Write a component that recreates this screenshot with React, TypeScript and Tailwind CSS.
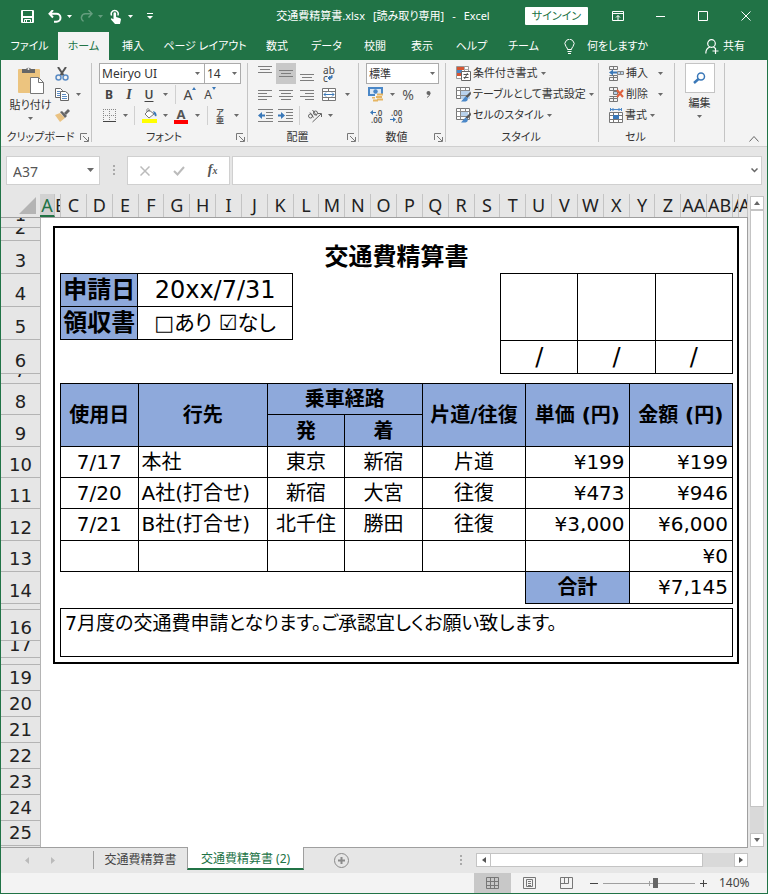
import React from 'react';

const tabs = [
  { label: 'ファイル', width: 'w-[57px]' },
  { label: 'ホーム', width: 'w-[51px]', active: true },
  { label: '挿入', width: 'w-12' },
  { label: 'ページ レイアウト', width: 'w-24' },
  { label: '数式', width: 'w-12' },
  { label: 'データ', width: 'w-[51px]' },
  { label: '校閲', width: 'w-[46px]' },
  { label: '表示', width: 'w-12' },
  { label: 'ヘルプ', width: 'w-[51px]' },
  { label: 'チーム', width: 'w-[53px]' },
];

const columns = [
  'A', 'B', 'C', 'D', 'E', 'F', 'G', 'H', 'I', 'J', 'K', 'L', 'M', 'N', 'O',
  'P', 'Q', 'R', 'S', 'T', 'U', 'V', 'W', 'X', 'Y', 'Z', 'AA', 'AB', 'AC', 'AD',
];

// columns too narrow for their letter, clipped on the right
const narrowColumns = ['B', 'AC', 'AD'];

const rows = [
  { label: '1', height: 'h-[10px]' },
  { label: '2', height: 'h-[13px]' },
  { label: '3', height: 'h-[33px]' },
  { label: '4', height: 'h-[33px]' },
  { label: '5', height: 'h-[33px]' },
  { label: '6', height: 'h-[34px]' },
  { label: '7', height: 'h-[10px]' },
  { label: '8', height: 'h-[31px]' },
  { label: '9', height: 'h-[32px]' },
  { label: '10', height: 'h-[31px]' },
  { label: '11', height: 'h-[31px]' },
  { label: '12', height: 'h-[32px]' },
  { label: '13', height: 'h-[31px]' },
  { label: '14', height: 'h-[32px]' },
  { label: '', height: 'h-[6px]' },
  { label: '16', height: 'h-[31px]' },
  { label: '17', height: 'h-[17px]' },
  { label: '', height: 'h-[7px]' },
  { label: '19', height: 'h-[26px]' },
  { label: '20', height: 'h-[26px]' },
  { label: '21', height: 'h-[26px]' },
  { label: '22', height: 'h-[26px]' },
  { label: '23', height: 'h-[26px]' },
  { label: '24', height: 'h-[26px]' },
  { label: '25', height: 'h-[25px]' },
];

const trips = [
  { date: '7/17', place: '本社', from: '東京', to: '新宿', way: '片道', price: '¥199', total: '¥199' },
  { date: '7/20', place: 'A社(打合せ)', from: '新宿', to: '大宮', way: '往復', price: '¥473', total: '¥946' },
  { date: '7/21', place: 'B社(打合せ)', from: '北千住', to: '勝田', way: '往復', price: '¥3,000', total: '¥6,000' },
  { date: '', place: '', from: '', to: '', way: '', price: '', total: '¥0' },
];

const Caret: React.FC<{ className?: string }> = ({ className = 'text-[#6a6a6a]' }) => (
  <svg width="5" height="3" viewBox="0 0 5 3" className={`shrink-0 ${className}`}>
    <path d="M0 0h5L2.500 3z" fill="currentColor" />
  </svg>
);

const Sep = () => <span className="h-[19px] w-px shrink-0 bg-[#d0d0d0]" />;

const Tool: React.FC<{ label: string; width?: string; children: React.ReactNode }> = ({
  label,
  width = 'w-5',
  children,
}) => (
  <button type="button" aria-label={label} className={`flex h-[21px] shrink-0 items-center justify-center ${width}`}>
    {children}
  </button>
);

const Drop = () => (
  <button type="button" aria-label="その他" className="flex h-[21px] w-3 shrink-0 items-center justify-center">
    <Caret />
  </button>
);

const Launcher = () => (
  <button type="button" aria-label="ダイアログを表示">
    <svg width="9" height="9" viewBox="0 0 9 9" fill="none" stroke="#777">
      <path d="M.5 7V.5H7M3 3l5 5M8.500 4v4.500H4" />
    </svg>
  </button>
);

const Group: React.FC<{ label: string; width: string; launcher?: boolean; children: React.ReactNode }> = ({
  label,
  width,
  launcher,
  children,
}) => (
  <section className={`flex shrink-0 items-start ${width}`}>
    <div className="flex min-w-0 flex-1 flex-col">
      <div className="h-[66px]">{children}</div>
      <div className="flex h-4 items-center pr-0.5">
        <span className="flex-1 text-center">{label}</span>
        {launcher && <Launcher />}
      </div>
    </div>
    <span className="h-[79px] w-px bg-[#c4c4c4]" />
  </section>
);

const Lines: React.FC<{ rows: [number, number, number][] }> = ({ rows }) => (
  <svg width="14" height="17" viewBox="0 0 14 17" stroke="#7d7d7d" shapeRendering="crispEdges">
    {rows.map(([x1, x2, y]) => (
      <path key={y} d={`M${x1} ${y + 0.5}H${x2}`} />
    ))}
  </svg>
);

const IndentIcon: React.FC<{ out?: boolean }> = ({ out }) => (
  <svg width="15" height="13" viewBox="0 0 15 13" fill="none">
    <path d="M0 .5h15M8 3.500h7M8 6.500h7M8 9.500h7M0 12.500h15" stroke="#7d7d7d" />
    {out ? (
      <path d="M0 6.500 4 3v2.500h3v2H4V10z" fill="#3a78b8" />
    ) : (
      <path d="M7 6.500 3 3v2.500H0v2h3V10z" fill="#3a78b8" />
    )}
  </svg>
);

const ScissorsIcon = () => (
  <svg width="14" height="14" viewBox="0 0 14 14" fill="none">
    <path d="M3 0 9 9M11 0 5 9" stroke="#555" strokeWidth="2" />
    <circle cx="3.500" cy="10.500" r="2.500" stroke="#5b8cc4" strokeWidth="1.500" />
    <circle cx="10.500" cy="10.500" r="2.500" stroke="#5b8cc4" strokeWidth="1.500" />
  </svg>
);

const CopyIcon = () => (
  <svg width="14" height="13" viewBox="0 0 14 13" stroke="#666">
    <path d="M.5.500h5l2 2v7h-7z" fill="#fff" />
    <path d="M2 3.500h3M2 5.500h3M2 7.500h3" stroke="#5b8cc4" />
    <path d="M5.500 3.500h5l3 2.500v6.500h-8z" fill="#fff" />
    <path d="M7 6.500h4M7 8.500h5M7 10.500h5" stroke="#5b8cc4" />
  </svg>
);

const BrushIcon = () => (
  <svg width="15" height="13" viewBox="0 0 15 13">
    <path d="M0 6 5 4l5 5-5 4z" fill="#eac282" />
    <path d="m5 3 2-1 5 5-2 2z" fill="#666" />
    <path d="m9 4 4-4 2 2-4 4z" fill="#666" />
  </svg>
);

const PasteIcon = () => (
  <svg width="27" height="29" viewBox="0 0 27 29">
    <path d="M2 3h20q1 0 1 1v22q0 1-1 1H2q-1 0-1-1V4q0-1 1-1z" fill="#ecc47f" />
    <path d="M5 7V3h4a3 3 0 0 1 5 0h4v4z" fill="#666" />
    <circle cx="11.500" cy="3" r="1" fill="#f3f3f3" />
    <path d="M13.500 11.500h8l5 5v11h-13z" fill="#fff" stroke="#777" />
    <path d="M21.500 11.500v5h5" fill="none" stroke="#777" />
  </svg>
);

const MoneyIcon = () => (
  <svg width="16" height="15" viewBox="0 0 16 15">
    <path d="M0 0h15v9H0z" fill="#4a87c7" />
    <path d="M2 2h11v5H2z" fill="#dbe8f5" />
    <circle cx="7.500" cy="4.500" r="2.200" fill="#4a87c7" />
    <path d="M7 7h9v8H4v-4h3z" fill="#f3f3f3" />
    <path d="M9 6.500h6v2H9zM8 9h6v2H8zM4 10h3v1.500H4zM9 11.500h6v2H9zM5 12.500h5v2H5z" fill="#e6b562" />
  </svg>
);

const TableStyleIcon: React.FC<{ wide?: boolean }> = ({ wide }) => (
  <svg width="15" height="15" viewBox="0 0 15 15">
    <path d="M.5.500h13v11H.5z" fill="#fff" stroke="#777" />
    <path d={wide ? 'M4 3h8v6H4z' : 'M5 4h9v8H5z'} fill="#b9d2ec" />
    <path d="M.5 3.500h13M.5 8.500h13M4.500.5v11M9.500.5v3" fill="none" stroke="#8a8a8a" />
    <path d="m14.500 4.500-5 5 2 1.500 3.500-4z" fill="#555" />
    <path d="M9.500 9.500 5 14.500h4.500q3-1 2-3.500z" fill="#4a87c7" />
  </svg>
);

const ConditionalIcon = () => (
  <svg width="15" height="15" viewBox="0 0 15 15">
    <path d="M.5.500h12v12H.5z" fill="#fff" stroke="#999" />
    <path d="M1 1h7v3H1z" fill="#d65532" />
    <path d="M1 4h5v3H1z" fill="#4a87c7" />
    <path d="M1 7h4v3H1z" fill="#d65532" />
    <path d="M8.500.5v6M8.500 3.500h4" stroke="#aaa" />
    <path d="M5.500 5.500h9v9h-9z" fill="#fff" stroke="#666" />
    <path d="M7.500 8.500h5M7.500 11.500h5M11.500 7l-3 6" stroke="#555" />
  </svg>
);

const InsertCellIcon = () => (
  <svg width="15" height="15" viewBox="0 0 15 15" fill="none">
    <path d="M.5.500h8v3h-8zM.5 11.500h8v3h-8zM4.500.5v3M4.500 9v5.500M.5 9.500h8v2" stroke="#777" />
    <path d="M8.500 5.500h6v3h-6zM11.500 5.500v3" fill="#b9d2ec" stroke="#888" />
    <path d="M0 6.500 4 3.500v2h4v2H4v2z" fill="#3a78b8" />
  </svg>
);

const DeleteCellIcon = () => (
  <svg width="15" height="15" viewBox="0 0 15 15" fill="none">
    <path d="M.5.500h8v3h-8zM.5 11.500h8v3h-8zM4.500.5v3M4.500 9v5.500M.5 9.500h8v2" stroke="#777" />
    <path d="M4.500 4.500h4v3h-4z" fill="#b9d2ec" stroke="#777" />
    <path d="m8 3 6 7M14 3 8 10" stroke="#e0603c" strokeWidth="2" />
  </svg>
);

const FormatCellIcon = () => (
  <svg width="14" height="15" viewBox="0 0 14 15" fill="none">
    <path d="M1 1.500h12M1.500 0v3M12.500 0v3M4 0v3M10 0v3" stroke="#4a87c7" />
    <path d="M.5 4.500h13v10H.5zM.5 7.500h13M.5 11.500h13M4.500 4.500v10M9.500 4.500v10" fill="#fff" stroke="#777" />
    <path d="M4 7h6v4H4z" fill="#3a78b8" />
  </svg>
);

const StyleItem: React.FC<{ label: string; icon: React.ReactNode; gap?: string }> = ({ label, icon, gap = 'gap-[3px]' }) => (
  <button type="button" className={`flex h-[21px] items-center whitespace-nowrap ${gap}`}>
    <span className="flex items-center gap-0.5">
      {icon}
      {label}
    </span>
    <Caret />
  </button>
);

const TitleBar = () => (
  <header className="flex h-8 items-center text-white">
    <div className="flex w-[240px] items-center pl-[20px]">
      <button type="button" aria-label="上書き保存">
        <svg width="13" height="13" viewBox="0 0 13 13" fill="none" stroke="#fff">
          <path d="M.5.500h12v12H.5zM1.500.5v12M11.500.5v12M1 6.500h11M1 7.500h11M3.500 12.500v-3h6v3M5.500 10v2.500" />
        </svg>
      </button>
      <button type="button" aria-label="元に戻す" className="ml-3.5 flex items-center gap-[5px]">
        <svg width="14" height="13" viewBox="0 0 14 13" fill="none" stroke="#fff" strokeWidth="2">
          <path d="M5 0 1.500 3.800 5 7.500M2 3.800h6.500a4 4 0 0 1 0 8H6" />
        </svg>
        <Caret className="text-white" />
      </button>
      <button type="button" aria-label="やり直し" className="ml-2 flex items-center gap-[5px] opacity-30">
        <svg width="13" height="13" viewBox="0 0 13 13" fill="none" stroke="#fff" strokeWidth="1.500">
          <path d="m8.500 0 3.500 3.800-3.500 3.700M12 3.800H5.500a4 4 0 0 0-2 7.500" />
        </svg>
        <Caret className="text-white" />
      </button>
      <button type="button" aria-label="タッチ/マウス モード" className="ml-[7px] flex items-center gap-[7px]">
        <svg width="11" height="15" viewBox="0 0 11 15" fill="#fff">
          <path d="M3.500 4.500a1.300 1.300 0 0 1 2.600 0V8l4 1.200q1 .4.800 1.500L10 15H5L1.200 10.800q-.8-1 .3-1.500l2 .9z" />
          <path d="M1.600 6.500a3.500 3.500 0 1 1 6.200 0" fill="none" stroke="#fff" strokeWidth="1.500" />
        </svg>
        <Caret className="text-white" />
      </button>
      <button type="button" aria-label="クイック アクセス ツール バーのカスタマイズ" className="ml-[14px]">
        <svg width="6" height="6" viewBox="0 0 6 6" fill="#fff">
          <path d="M0 0h6v1H0zM0 3h6L3 6z" />
        </svg>
      </button>
    </div>
    <h1 className="flex flex-1 justify-center gap-2 whitespace-nowrap">
      <span>交通費精算書.xlsx</span>
      <span>[読み取り専用]</span>
      <span>-</span>
      <span>Excel</span>
    </h1>
    <div className="flex w-[242px] items-center">
      <button type="button" className="h-[18px] w-[63px] rounded-[1px] bg-white text-[#217346]">
        サインイン
      </button>
      <button type="button" aria-label="リボンの表示オプション" className="ml-[24px]">
        <svg width="12" height="10" viewBox="0 0 12 10" fill="none" stroke="#fff">
          <path d="M.5.500h11v9H.5zM.5 2.500h11M6 9V4.500M4 6.500l2-2 2 2" />
        </svg>
      </button>
      <button type="button" aria-label="最小化" className="ml-[32px]">
        <svg width="9" height="11" viewBox="0 0 9 11" stroke="#fff">
          <path d="M0 5.500h9" />
        </svg>
      </button>
      <button type="button" aria-label="最大化" className="ml-[33px]">
        <svg width="10" height="10" viewBox="0 0 10 10" fill="none" stroke="#fff">
          <path d="M.5.500h9v9h-9z" />
        </svg>
      </button>
      <button type="button" aria-label="閉じる" className="ml-[33px]">
        <svg width="10" height="10" viewBox="0 0 10 10" stroke="#fff">
          <path d="m.5.500 9 9M9.500.5l-9 9" />
        </svg>
      </button>
    </div>
  </header>
);

const TabBar = () => (
  <nav className="flex h-7 items-stretch text-white">
    {tabs.map((tab) => (
      <button
        key={tab.label}
        type="button"
        className={`shrink-0 whitespace-nowrap ${tab.width} ${tab.active ? 'bg-[#f3f3f3] text-[#217346]' : ''}`}
      >
        {tab.label}
      </button>
    ))}
    <button type="button" className="ml-[14px] flex items-center gap-3 whitespace-nowrap">
      <svg width="11" height="15" viewBox="0 0 11 15" fill="none" stroke="#fff">
        <path d="M3.500 10.500q0-1.500-1.500-3a4.500 4.500 0 1 1 7 0q-1.500 1.500-1.500 3zM3.500 12.500h4M4 14.500h3" />
      </svg>
      何をしますか
    </button>
    <button type="button" className="ml-auto flex items-center gap-1 pr-[22px]">
      <svg width="14" height="15" viewBox="0 0 14 15" fill="none" stroke="#fff" strokeWidth="1.200">
        <circle cx="6.500" cy="4.500" r="3.800" />
        <path d="M.8 14.500q0-5 4-6.500M8.500 8l2 1.500M10.500 9v6M7.500 12h6" />
      </svg>
      共有
    </button>
  </nav>
);

const Ribbon = () => (
  <div className="flex h-[86px] items-start bg-[#f3f3f3] pt-[3px] text-[#333]">
    <Group label="クリップボード" width="w-[91px]" launcher>
      <div className="flex">
        <button type="button" className="flex w-[51px] flex-col items-center pt-[3px] pl-2 whitespace-nowrap">
          <PasteIcon />
          <span className="mt-0.5 leading-4">貼り付け</span>
          <span className="mt-1"><Caret /></span>
        </button>
        <div className="flex flex-col">
          <Tool label="切り取り"><ScissorsIcon /></Tool>
          <div className="flex">
            <Tool label="コピー"><CopyIcon /></Tool>
            <Drop />
          </div>
          <Tool label="書式のコピー/貼り付け"><BrushIcon /></Tool>
        </div>
      </div>
    </Group>

    <Group label="フォント" width="w-[156px]" launcher>
      <div className="flex flex-col pl-[7px]">
        <div className="flex h-[21px]">
          <div className="relative">
            <select aria-label="フォント" className="h-[21px] w-[106px] appearance-none border border-[#ababab] bg-white pl-0.5 text-xs leading-[19px]">
              <option>Meiryo UI</option>
            </select>
            <Caret className="pointer-events-none absolute top-[9px] right-[5px] text-[#6a6a6a]" />
          </div>
          <div className="relative -ml-px">
            <select aria-label="フォント サイズ" className="h-[21px] w-[37px] appearance-none border border-[#ababab] bg-white pl-0.5 text-xs leading-[19px]">
              <option>14</option>
            </select>
            <Caret className="pointer-events-none absolute top-[9px] right-1 text-[#6a6a6a]" />
          </div>
        </div>
        <div className="flex items-center text-xs text-[#444]">
          <Tool label="太字"><b>B</b></Tool>
          <Tool label="斜体"><i className="font-['Liberation_Serif',serif] text-sm font-bold">I</i></Tool>
          <Tool label="下線"><span className="font-semibold underline underline-offset-2">U</span></Tool>
          <Drop />
          <span className="w-1" />
          <Sep />
          <span className="w-1" />
          <Tool label="フォント サイズの拡大">
            <span className="text-sm leading-4">A</span>
            <svg width="4" height="3" viewBox="0 0 4 3" className="-mt-3"><path d="M0 3h4L2 0z" fill="#3a78b8" /></svg>
          </Tool>
          <Tool label="フォント サイズの縮小">
            <span className="text-xs leading-4">A</span>
            <svg width="4" height="3" viewBox="0 0 4 3" className="-mt-3"><path d="M0 0h4L2 3z" fill="#3a78b8" /></svg>
          </Tool>
        </div>
        <div className="flex items-center">
          <Tool label="罫線">
            <svg width="13" height="13" viewBox="0 0 13 13" stroke="#888" shapeRendering="crispEdges">
              <path d="M0 .5h13M0 6.500h13M.5 0v12M6.500 0v12M12.500 0v12" strokeDasharray="1 1" />
              <path d="M0 12.500h13" stroke="#444" />
            </svg>
          </Tool>
          <Drop />
          <span className="w-[3px]" />
          <Sep />
          <span className="w-1" />
          <Tool label="塗りつぶしの色">
            <svg width="15" height="15" viewBox="0 0 15 15" fill="none">
              <path d="M0 11h15v4H0z" fill="#ffff00" />
              <path d="m3 6 4-4 5 4-5 4zM5 4V1.500q1-2 2 0V4" fill="#fff" stroke="#777" />
              <path d="M11 3q4 1 3.500 5-1.500 1-2-1z" fill="#3a78b8" />
            </svg>
          </Tool>
          <Drop />
          <Tool label="フォントの色">
            <span className="flex w-[14px] flex-col items-center">
              <b className="h-3 text-[13px] leading-3 text-[#555]">A</b>
              <span className="h-1 w-full bg-[#ff0000]" />
            </span>
          </Tool>
          <Drop />
          <span className="w-1" />
          <Sep />
          <span className="w-0.5" />
          <Tool label="ふりがなの表示/非表示">
            <span className="flex flex-col items-center text-[8px] leading-[8px] font-bold text-[#555]">
              <span>ア</span>
              <span>亜</span>
            </span>
          </Tool>
          <Drop />
        </div>
      </div>
    </Group>

    <Group label="配置" width="w-[111px]" launcher>
      <div className="flex flex-col pl-[7px]">
        <div className="flex gap-px">
          <Tool label="上揃え"><Lines rows={[[0, 14, 1], [2, 12, 4], [0, 14, 7]]} /></Tool>
          <button type="button" aria-label="上下中央揃え" aria-pressed="true" className="flex h-[21px] w-5 items-center justify-center bg-[#c8c8c8]">
            <Lines rows={[[0, 14, 5], [2, 12, 8], [0, 14, 11]]} />
          </button>
          <Tool label="下揃え"><Lines rows={[[0, 14, 9], [2, 12, 12], [0, 14, 15]]} /></Tool>
          <Tool label="折り返して全体を表示する" width="w-[22px]">
            <span className="flex flex-col text-[10px] leading-[8px] text-[#444]">
              <span>ab</span>
              <span className="flex items-center">
                c
                <svg width="5" height="5" viewBox="0 0 5 5"><path d="M4 0v3H1M0 3l2-2v4z" fill="#3a78b8" stroke="#3a78b8" /></svg>
              </span>
            </span>
          </Tool>
        </div>
        <div className="flex gap-px">
          <Tool label="左揃え"><Lines rows={[[0, 14, 4], [0, 9, 7], [0, 14, 10], [0, 9, 13]]} /></Tool>
          <Tool label="中央揃え"><Lines rows={[[0, 14, 4], [2, 12, 7], [0, 14, 10], [2, 12, 13]]} /></Tool>
          <Tool label="右揃え"><Lines rows={[[0, 14, 4], [5, 14, 7], [0, 14, 10], [5, 14, 13]]} /></Tool>
          <Tool label="セルを結合して中央揃え" width="w-[22px]">
            <svg width="14" height="13" viewBox="0 0 14 13" fill="#fff" stroke="#777">
              <path d="M.5.500h13v12H.5zM.5 3.500h13M.5 9.500h13M6.500.5v3M6.500 9.500v3" />
              <path d="M2 6.500h10M4 4.500l-2 2 2 2M10 4.500l2 2-2 2" fill="none" stroke="#3a78b8" />
            </svg>
          </Tool>
          <Drop />
        </div>
        <div className="flex items-center">
          <Tool label="インデントを減らす"><IndentIcon out /></Tool>
          <Tool label="インデントを増やす"><IndentIcon /></Tool>
          <span className="w-1" />
          <Sep />
          <span className="w-1" />
          <Tool label="方向">
            <svg width="15" height="14" viewBox="0 0 15 14" fill="none" stroke="#666">
              <circle cx="3.500" cy="7" r="2" />
              <path d="m3 3.500 3.500 5M5.500 1l4 5.500" />
              <circle cx="8.500" cy="4" r="2" />
              <path d="m5.500 13 8.500-8M11 4.500h3.500V8" />
            </svg>
          </Tool>
          <Drop />
        </div>
      </div>
    </Group>

    <Group label="数値" width="w-[87px]" launcher>
      <div className="flex flex-col pl-[7px]">
        <div className="relative w-[73px]">
          <select aria-label="表示形式" className="h-[21px] w-full appearance-none border border-[#ababab] bg-white pl-0.5 leading-[19px]">
            <option>標準</option>
          </select>
          <Caret className="pointer-events-none absolute top-[9px] right-1 text-[#6a6a6a]" />
        </div>
        <div className="flex">
          <Tool label="通貨表示形式"><MoneyIcon /></Tool>
          <Drop />
          <Tool label="パーセント スタイル"><span className="text-sm text-[#555]">%</span></Tool>
          <Tool label="桁区切りスタイル">
            <svg width="5" height="7" viewBox="0 0 5 7"><circle cx="2.500" cy="2" r="2" fill="#666" /><path d="M4 2q0 3-3 4.500" fill="none" stroke="#666" /></svg>
          </Tool>
        </div>
        <div className="flex text-[8px] leading-[7px] font-semibold text-[#555]">
          <Tool label="小数点以下の表示桁数を増やす">
            <span className="flex flex-col items-end">
              <span className="flex items-center">
                <svg width="6" height="5" viewBox="0 0 6 5"><path d="m0 2.500 3-2.500v2h3v1H3v2z" fill="#3a78b8" /></svg>
                .0
              </span>
              <span>.00</span>
            </span>
          </Tool>
          <Tool label="小数点以下の表示桁数を減らす">
            <span className="flex flex-col items-end">
              <span>.00</span>
              <span className="flex items-center">
                <svg width="6" height="5" viewBox="0 0 6 5"><path d="M6 2.500 3 0v2H0v1h3v2z" fill="#3a78b8" /></svg>
                .0
              </span>
            </span>
          </Tool>
        </div>
      </div>
    </Group>

    <Group label="スタイル" width="w-[153px]">
      <div className="flex flex-col items-start pl-2.5">
        <StyleItem label="条件付き書式" icon={<ConditionalIcon />} />
        <StyleItem label="テーブルとして書式設定" icon={<TableStyleIcon />} />
        <StyleItem label="セルのスタイル" icon={<TableStyleIcon wide />} />
      </div>
    </Group>

    <Group label="セル" width="w-[76px]">
      <div className="flex flex-col items-start pl-2.5">
        <StyleItem label="挿入" icon={<InsertCellIcon />} gap="gap-2.5" />
        <StyleItem label="削除" icon={<DeleteCellIcon />} gap="gap-2.5" />
        <StyleItem label="書式" icon={<FormatCellIcon />} />
      </div>
    </Group>

    <Group label="" width="w-[50px]">
      <button type="button" className="flex w-full flex-col items-center">
        <span className="flex h-[30px] w-[30px] items-center justify-center border border-[#c4c4c4] bg-white">
          <svg width="13" height="12" viewBox="0 0 13 12" fill="none" stroke="#3a78b8">
            <circle cx="8" cy="4.500" r="3.500" strokeWidth="1.500" />
            <path d="m5.500 7-4.500 4" strokeWidth="2.500" />
          </svg>
        </span>
        <span className="mt-0.5 leading-4">編集</span>
        <span className="mt-1"><Caret /></span>
      </button>
    </Group>

    <button type="button" aria-label="リボンを折りたたむ" className="mt-[73px] mr-2 ml-auto">
      <svg width="10" height="6" viewBox="0 0 10 6" fill="none" stroke="#666">
        <path d="m.5 5.500 4.500-5 4.500 5" />
      </svg>
    </button>
  </div>
);

const Dots = () => (
  <svg width="2" height="11" viewBox="0 0 2 11" fill="#aaa">
    <path d="M0 0h2v2H0zM0 4h2v2H0zM0 8h2v2H0z" />
  </svg>
);

const FormulaBar = () => (
  <div className="flex h-12 items-start border-t border-[#cfcfcf] pt-[9px] pr-[5px] pl-[5px]">
    <div className="relative">
      <input
        aria-label="名前ボックス"
        defaultValue="A37"
        className="h-[29px] w-[94px] border border-[#d0d0d0] bg-white pt-0.5 pl-1.5 text-sm text-[#555]"
      />
      <svg width="7" height="4" viewBox="0 0 7 4" className="pointer-events-none absolute top-3 right-[6px]">
        <path d="M0 0h7L3.500 4z" fill="#6a6a6a" />
      </svg>
    </div>
    <div className="flex h-[29px] w-[27px] items-center justify-center"><Dots /></div>
    <div className="flex h-[29px] w-[103px] items-center justify-around border border-[#d0d0d0] bg-white">
      <button type="button" aria-label="キャンセル">
        <svg width="10" height="10" viewBox="0 0 10 10" stroke="#bbb" strokeWidth="1.500"><path d="m.5.500 9 9M9.500.5l-9 9" /></svg>
      </button>
      <button type="button" aria-label="入力">
        <svg width="12" height="10" viewBox="0 0 12 10" fill="none" stroke="#bbb" strokeWidth="2"><path d="m1 5 3.500 3.500L11 1" /></svg>
      </button>
      <button type="button" aria-label="関数の挿入" className="font-['Liberation_Serif',serif] text-sm leading-4 font-bold text-[#555] italic">
        f<span className="text-[10px]">x</span>
      </button>
    </div>
    <div className="relative ml-0.5 flex-1">
      <input aria-label="数式バー" className="h-[29px] w-full border border-[#d0d0d0] bg-white px-1 text-sm" />
      <svg width="7" height="5" viewBox="0 0 7 5" className="pointer-events-none absolute top-3 right-1" fill="none" stroke="#666" strokeWidth="1.500">
        <path d="m.5.500 3 3 3-3" />
      </svg>
    </div>
  </div>
);

const ColumnHeader = () => (
  <div className="flex h-6 border-b border-[#9f9f9f]">
    <button type="button" aria-label="すべて選択" className="flex w-[39px] shrink-0 items-end justify-end pr-1 pb-[3px]">
      <svg width="17" height="17" viewBox="0 0 17 17"><path d="M17 0v17H0z" fill="#b4b4b4" /></svg>
    </button>
    <div className="grid min-w-0 flex-1 grid-cols-[15px_6px_repeat(26,minmax(0,1fr))_6px_9px] text-[18px] leading-[22px] text-[#222]">
      {columns.map((name) => (
        <div
          key={name}
          className={`flex overflow-hidden border-r ${narrowColumns.includes(name) ? 'justify-start' : 'justify-center'} ${
            name === 'A' ? 'border-b-2 border-[#c4c4c4] border-b-[#217346] bg-[#d2d2d2] text-[#217346]' : 'border-[#c4c4c4]'
          }`}
        >
          {name}
        </div>
      ))}
    </div>
  </div>
);

const RowHeader = () => (
  <div className="flex w-10 shrink-0 flex-col border-r border-[#b4b4b4] font-['DejaVu_Sans',sans-serif] text-[18px] leading-6 text-[#222]">
    {rows.map((row, i) => (
      <div key={i} className={`flex shrink-0 items-end justify-center overflow-hidden border-b border-[#b4b4b4] ${row.height}`}>
        {row.label}
      </div>
    ))}
  </div>
);

const Report = () => (
  <div className="border-2 border-black pr-1 pb-[5px] pl-[5px] text-black">
    <h2 className="pt-[13px] text-center text-2xl leading-8 font-bold">交通費精算書</h2>
    <div className="flex items-start justify-between">
      <table className="w-9/26 table-fixed border-collapse text-2xl leading-8">
        <tbody>
          <tr className="h-[33px]">
            <th scope="row" className="w-1/3 border border-black bg-[#8ea9db] p-0 whitespace-nowrap">申請日</th>
            <td className="border border-black p-0 text-center">20xx/7/31</td>
          </tr>
          <tr className="h-[33px]">
            <th scope="row" className="border border-black bg-[#8ea9db] p-0 whitespace-nowrap">領収書</th>
            <td className="border border-black p-0 text-center text-[21px]">□あり ☑なし</td>
          </tr>
        </tbody>
      </table>
      <table className="w-9/26 table-fixed border-collapse text-2xl leading-8">
        <tbody>
          <tr className="h-[67px]">
            <td className="border border-black" />
            <td className="border border-black" />
            <td className="border border-black" />
          </tr>
          <tr className="h-[33px]">
            <td className="border border-black p-0 text-center">/</td>
            <td className="border border-black p-0 text-center">/</td>
            <td className="border border-black p-0 text-center">/</td>
          </tr>
        </tbody>
      </table>
    </div>

    <table className="mt-[9px] h-[221px] w-full table-fixed border-collapse text-[20px] leading-7 whitespace-nowrap">
      <colgroup>
        <col className="w-3/26" />
        <col className="w-5/26" />
        <col className="w-3/26" />
        <col className="w-3/26" />
        <col className="w-4/26" />
        <col className="w-4/26" />
        <col className="w-4/26" />
      </colgroup>
      <thead className="bg-[#8ea9db]">
        <tr className="h-[31px]">
          <th rowSpan={2} className="border border-black p-0">使用日</th>
          <th rowSpan={2} className="border border-black p-0">行先</th>
          <th colSpan={2} className="border border-black p-0">乗車経路</th>
          <th rowSpan={2} className="border border-black p-0">片道/往復</th>
          <th rowSpan={2} className="border border-black p-0">単価 (円)</th>
          <th rowSpan={2} className="border border-black p-0">金額 (円)</th>
        </tr>
        <tr className="h-8">
          <th className="border border-black p-0">発</th>
          <th className="border border-black p-0">着</th>
        </tr>
      </thead>
      <tbody>
        {trips.map((trip, i) => (
          <tr key={i} className="h-[31px]">
            <td className="border border-black p-0 text-center">{trip.date}</td>
            <td className="border border-black p-0 pl-[3px]">{trip.place}</td>
            <td className="border border-black p-0 text-center">{trip.from}</td>
            <td className="border border-black p-0 text-center">{trip.to}</td>
            <td className="border border-black p-0 text-center">{trip.way}</td>
            <td className="border border-black p-0 pr-1 text-right">{trip.price}</td>
            <td className="border border-black p-0 pr-1 text-right">{trip.total}</td>
          </tr>
        ))}
        <tr className="h-8">
          <td colSpan={5} className="p-0" />
          <th scope="row" className="border border-black bg-[#8ea9db] p-0">合計</th>
          <td className="border border-black p-0 pr-1 text-right">¥7,145</td>
        </tr>
      </tbody>
    </table>

    <p className="mt-1 h-[49px] border border-black pl-1 text-[19px] leading-7">
      7月度の交通費申請となります。ご承認宜しくお願い致します。
    </p>
  </div>
);

const VerticalScroll = () => (
  <div className="flex w-[19px] shrink-0 flex-col pt-0.5 pr-[3px] pl-0.5">
    <button type="button" aria-label="上へ" className="flex h-[14px] items-center justify-center border border-[#c4c4c4] bg-white">
      <svg width="6" height="4" viewBox="0 0 6 4"><path d="M0 4h6L3 0z" fill="#666" /></svg>
    </button>
    <div className="flex flex-1 flex-col bg-[#d9d9d9] pb-[26px]">
      <div className="flex-1 border border-[#c4c4c4] bg-white" />
    </div>
    <button type="button" aria-label="下へ" className="flex h-[14px] items-center justify-center border border-[#c4c4c4] bg-white">
      <svg width="6" height="4" viewBox="0 0 6 4"><path d="M0 0h6L3 4z" fill="#666" /></svg>
    </button>
  </div>
);

const SheetTabs = () => (
  <div className="flex h-[26px] items-start text-xs">
    <div className="flex h-[25px] w-[92px] shrink-0 items-center gap-[22px] border-t border-[#9f9f9f] pl-6">
      <svg width="4" height="7" viewBox="0 0 4 7"><path d="M4 0v7L0 3.500z" fill="#bbb" /></svg>
      <svg width="4" height="7" viewBox="0 0 4 7"><path d="M0 0v7l4-3.500z" fill="#bbb" /></svg>
    </div>
    <button type="button" className="flex h-[25px] w-[94px] items-center border-t border-[#9f9f9f] whitespace-nowrap text-[#444]">
      <span className="w-full border-l border-[#9f9f9f] leading-[18px]">交通費精算書</span>
    </button>
    <button type="button" className="h-[23px] w-[117px] border-x border-b-2 border-x-[#9f9f9f] border-b-[#217346] bg-white pt-0.5 whitespace-nowrap text-[#217346]">
      交通費精算書 (2)
    </button>
    <div className="flex h-[25px] flex-1 items-center border-t border-[#9f9f9f] pl-[30px]">
      <button type="button" aria-label="新しいシート">
        <svg width="15" height="15" viewBox="0 0 15 15" fill="none" stroke="#8a8a8a">
          <circle cx="7.500" cy="7.500" r="7" />
          <path d="M7.500 4v7M4 7.500h7" strokeWidth="2" />
        </svg>
      </button>
      <span className="mr-[14px] ml-auto"><Dots /></span>
      <div className="flex h-[14px] w-[272px]">
        <button type="button" aria-label="左へ" className="flex w-[15px] items-center justify-center border border-[#c4c4c4] bg-white">
          <svg width="4" height="6" viewBox="0 0 4 6"><path d="M4 0v6L0 3z" fill="#555" /></svg>
        </button>
        <div className="flex flex-1 bg-[#d9d9d9] pr-[31px]">
          <div className="-ml-px flex-1 border border-[#c4c4c4] bg-white" />
        </div>
        <button type="button" aria-label="右へ" className="flex w-[14px] items-center justify-center border border-[#c4c4c4] bg-white">
          <svg width="4" height="6" viewBox="0 0 4 6"><path d="M0 0v6l4-3z" fill="#555" /></svg>
        </button>
      </div>
    </div>
    <div className="w-[19px] shrink-0" />
  </div>
);

const StatusBar = () => (
  <footer className="flex h-5 items-center justify-end bg-[#f3f3f3] text-xs text-[#444]">
    <button type="button" aria-label="標準" className="flex h-5 w-[37px] items-center justify-center bg-[#c8c8c8]">
      <svg width="13" height="12" viewBox="0 0 13 12" fill="none" stroke="#777">
        <path d="M.5.500h12v11H.5zM.5 4.500h12M.5 8.500h12M4.500.5v11M8.500.5v11" />
      </svg>
    </button>
    <button type="button" aria-label="ページ レイアウト" className="flex h-5 w-[37px] items-center justify-center">
      <svg width="13" height="12" viewBox="0 0 13 12" fill="none" stroke="#777">
        <path d="M.5.500h12v11H.5zM3.500 2.500h6v7h-6zM5 4.500h3M5 6.500h3M5 8.500h3" />
      </svg>
    </button>
    <button type="button" aria-label="改ページ プレビュー" className="flex h-5 w-[37px] items-center justify-center">
      <svg width="13" height="12" viewBox="0 0 13 12" fill="none" stroke="#777">
        <path d="M.5.500h12v11H.5zM.5 6.500h8V.5M4.500.5v6" />
      </svg>
    </button>
    <button type="button" aria-label="縮小" className="mr-[5px] ml-[5px]">
      <svg width="8" height="9" viewBox="0 0 8 9" stroke="#444"><path d="M0 4.500h8" /></svg>
    </button>
    <div className="relative flex w-[92px] items-center">
      <span className="absolute left-[46px] h-[5px] w-px bg-[#9f9f9f]" />
      <input
        type="range"
        aria-label="ズーム"
        min={0}
        max={100}
        defaultValue={57}
        className="relative h-px w-full appearance-none bg-[#9f9f9f] [&::-webkit-slider-thumb]:h-[10px] [&::-webkit-slider-thumb]:w-[5px] [&::-webkit-slider-thumb]:appearance-none [&::-webkit-slider-thumb]:bg-[#666]"
      />
    </div>
    <button type="button" aria-label="拡大" className="ml-[5px]">
      <svg width="7" height="9" viewBox="0 0 7 9" stroke="#444"><path d="M0 4.500h7M3.500 1v7" /></svg>
    </button>
    <span className="w-[60px] pl-3">140%</span>
  </footer>
);

const App: React.FC = () => (
  <div className="flex min-h-screen flex-col border-x border-b border-[#217346] bg-[#e6e6e6] font-['Noto_Sans','Noto_Sans_CJK_JP',sans-serif] text-[11px] [font-feature-settings:'palt']">
    <div className="bg-[#217346]">
      <TitleBar />
      <TabBar />
    </div>
    <Ribbon />
    <FormulaBar />
    <main className="flex flex-1">
      <div className="flex min-w-0 flex-1 flex-col">
        <ColumnHeader />
        <div className="flex flex-1">
          <RowHeader />
          <div className="min-w-0 flex-1 border-r border-[#9f9f9f] bg-white pt-2 pr-2 pl-3 font-['DejaVu_Sans','Noto_Sans_CJK_JP',sans-serif]">
            <Report />
          </div>
        </div>
      </div>
      <VerticalScroll />
    </main>
    <SheetTabs />
    <StatusBar />
  </div>
);

export default App;
